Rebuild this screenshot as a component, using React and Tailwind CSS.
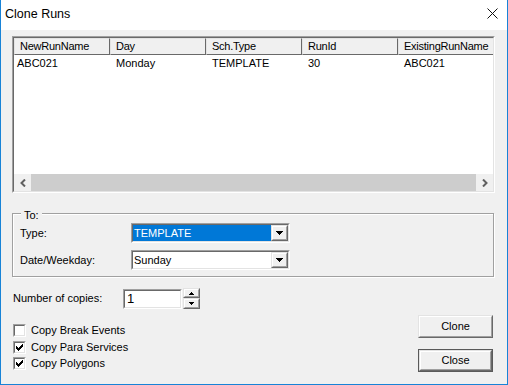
const sunken =
  "border border-t-[#a0a0a0] border-l-[#a0a0a0] border-b-white border-r-white";
const sunkenInner =
  "border border-t-[#696969] border-l-[#696969] border-b-[#e3e3e3] border-r-[#e3e3e3]";
const raised =
  "border border-t-[#e3e3e3] border-l-[#e3e3e3] border-b-[#696969] border-r-[#696969]";
const raisedInner =
  "border border-t-white border-l-white border-b-[#a0a0a0] border-r-[#a0a0a0]";

const columns = ["NewRunName", "Day", "Sch.Type", "RunId", "ExistingRunName"];
const rows = [["ABC021", "Monday", "TEMPLATE", "30", "ABC021"]];

function DownArrow() {
  return (
    <svg width="7" height="4" viewBox="0 0 7 4" shapeRendering="crispEdges">
      <path d="M0 0h7v1H0zM1 1h5v1H1zM2 2h3v1H2zM3 3h1v1H3z" fill="#000" />
    </svg>
  );
}

function SpinArrow({ up }) {
  return (
    <svg width="5" height="3" viewBox="0 0 5 3" shapeRendering="crispEdges">
      {up ? (
        <path d="M2 0h1v1H2zM1 1h3v1H1zM0 2h5v1H0z" fill="#000" />
      ) : (
        <path d="M0 0h5v1H0zM1 1h3v1H1zM2 2h1v1H2z" fill="#000" />
      )}
    </svg>
  );
}

function Combo({ value, selected }) {
  return (
    <div className={`w-[159px] h-[20px] ${sunken}`}>
      <div className={`h-full flex bg-white ${sunkenInner}`}>
        <div
          className={`flex-1 flex items-center pl-[1px] ${
            selected ? "bg-[#0078d7] text-white" : "text-black"
          }`}
        >
          {value}
        </div>
        <div className={`w-[17px] h-full ${raised}`}>
          <div className={`h-full flex items-center justify-center bg-[#f0f0f0] ${raisedInner}`}>
            <DownArrow />
          </div>
        </div>
      </div>
    </div>
  );
}

function CheckBox({ label, checked }) {
  return (
    <div className="flex items-center h-[13px]">
      <div className={`w-[13px] h-[13px] ml-[1px] ${sunken}`}>
        <div className={`w-full h-full bg-white flex items-center justify-center ${sunkenInner}`}>
          {checked && (
            <svg width="7" height="7" viewBox="0 0 7 7" shapeRendering="crispEdges">
              <path
                d="M6 0h1v3H6zM5 1h1v3H5zM4 2h1v3H4zM3 3h1v3H3zM2 4h1v3H2zM1 3h1v3H1zM0 2h1v3H0z"
                fill="#000"
              />
            </svg>
          )}
        </div>
      </div>
      <span className="ml-[5px]">{label}</span>
    </div>
  );
}

function Button({ children, isDefault }) {
  return (
    <div className={`w-[75px] h-[23px] ${isDefault ? "border border-[#5a5a5a]" : ""}`}>
      <div className={`w-full h-full ${raised}`}>
        <div className={`w-full h-full flex items-center justify-center bg-[#f0f0f0] ${raisedInner}`}>
          {children}
        </div>
      </div>
    </div>
  );
}

export default function App() {
  return (
    <div className="w-[508px] h-[385px] flex flex-col bg-[#f0f0f0] border-x border-b border-[#1883d7] overflow-hidden font-['Liberation_Sans',Arial,sans-serif] text-[11px] leading-[13px] text-black">
      {/* title bar */}
      <div className="h-[30px] shrink-0 bg-white flex items-center justify-between pl-[4px] pr-[9px]">
        <span className="text-[12.5px] leading-[16px] mt-[-3px]">Clone Runs</span>
        <svg width="11" height="11" viewBox="0 0 11 11" className="mt-[-4px]">
          <path d="M0.5 0.5L10.5 10.5M10.5 0.5L0.5 10.5" stroke="#111" strokeWidth="1" />
        </svg>
      </div>

      <div className="flex-1 pl-[11px] pt-[6px]">
        {/* runs list */}
        <div className={`w-[483px] h-[157px] ${sunken}`}>
          <div className={`h-full flex flex-col bg-white ${sunkenInner}`}>
            <div className="flex h-[17px] shrink-0 overflow-hidden tracking-[-0.25px]">
              {columns.map((c) => (
                <div
                  key={c}
                  className={`w-[96px] shrink-0 h-full flex items-center pl-[5px] bg-[#f0f0f0] whitespace-nowrap ${raised}`}
                >
                  {c}
                </div>
              ))}
            </div>
            {rows.map((r, i) => (
              <div key={i} className="flex h-[16px] items-center">
                {r.map((v, j) => (
                  <div
                    key={j}
                    className={`w-[96px] shrink-0 ${j === 0 ? "pl-[3px]" : "pl-[6px]"}`}
                  >
                    {v}
                  </div>
                ))}
              </div>
            ))}
            <div className="flex-1" />
            <div className="h-[17px] shrink-0 flex">
              <div className="w-[17px] h-full bg-[#f0f0f0] flex items-center justify-center">
                <svg width="6" height="8" viewBox="0 0 6 8">
                  <path d="M5 0.5L1.5 4L5 7.5" stroke="#606060" strokeWidth="2" fill="none" />
                </svg>
              </div>
              <div className="flex-1 h-full bg-[#cdcdcd]" />
              <div className="w-[17px] h-full bg-[#f0f0f0] flex items-center justify-center">
                <svg width="6" height="8" viewBox="0 0 6 8">
                  <path d="M1 0.5L4.5 4L1 7.5" stroke="#606060" strokeWidth="2" fill="none" />
                </svg>
              </div>
            </div>
          </div>
        </div>

        {/* To: group */}
        <div className="relative mt-[20px] w-[482px] border border-[#a0a0a0] shadow-[inset_1px_1px_#fff,1px_1px_#fff] pt-[9px] pb-[6px] pl-[7px]">
          <span className="absolute -top-[5px] left-[8px] px-[3px] bg-[#f0f0f0]">To:</span>
          <div className="flex items-center">
            <span className="w-[111px]">Type:</span>
            <Combo value="TEMPLATE" selected />
          </div>
          <div className="flex items-center mt-[7px]">
            <span className="w-[111px]">Date/Weekday:</span>
            <Combo value="Sunday" />
          </div>
        </div>

        {/* bottom */}
        <div className="mt-[11px] w-[481px] flex justify-between items-start">
          <div className="flex flex-col">
            <div className="flex items-center h-[21px]">
              <span className="w-[111px] pl-[1px]">Number of copies:</span>
              <div className={`w-[59px] h-[20px] ${sunken}`}>
                <div className={`h-full bg-white flex items-center pl-[2px] text-[13px] ${sunkenInner}`}>
                  1
                </div>
              </div>
              <div className="ml-[1px] w-[17px] h-[21px] flex flex-col">
                <div className={`h-[10px] ${raised}`}>
                  <div className={`h-full flex items-center justify-center bg-[#f0f0f0] ${raisedInner}`}>
                    <SpinArrow up />
                  </div>
                </div>
                <div className={`h-[11px] ${raised}`}>
                  <div className={`h-full flex items-center justify-center bg-[#f0f0f0] ${raisedInner}`}>
                    <SpinArrow />
                  </div>
                </div>
              </div>
            </div>
            <div className="mt-[15px] flex flex-col gap-[3.5px]">
              <CheckBox label="Copy Break Events" />
              <CheckBox label="Copy Para Services" checked />
              <CheckBox label="Copy Polygons" checked />
            </div>
          </div>
          <div className="flex flex-col pt-[27px] gap-[11px]">
            <Button>Clone</Button>
            <Button isDefault>Close</Button>
          </div>
        </div>
      </div>
    </div>
  );
}
